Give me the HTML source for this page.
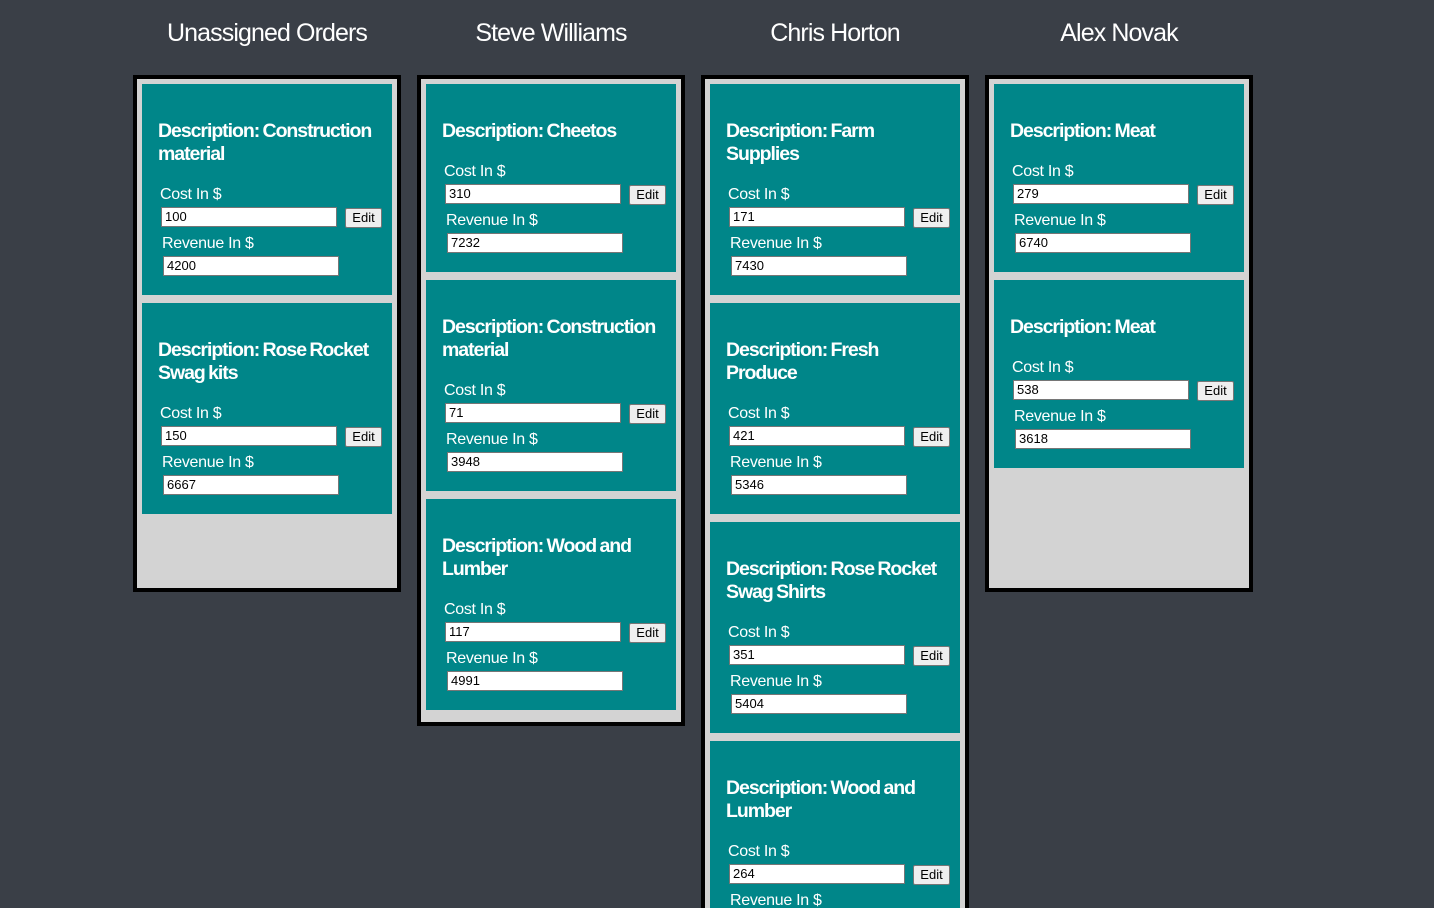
<!DOCTYPE html>
<html style="height:908px;overflow:hidden"><head><meta charset="utf-8"><style>
*{box-sizing:border-box;margin:0;padding:0}
body{width:1434px;height:908px;overflow:hidden;background:#3a3f47;font-family:"Liberation Sans",sans-serif;position:relative}
.h{position:absolute;top:17px;width:268px;text-align:center;color:#fff;font-size:25px;letter-spacing:-0.9px;line-height:32px}
.col{position:absolute;top:75px;width:268px;border:4px solid #000;background:#d3d3d3;padding:5px 5px 12px 5px;min-height:517px}
.card{background:#008689;padding:36px 0 19px 0;margin-bottom:8px;color:#fff}
.card:last-child{margin-bottom:0}
.t{font-size:19.5px;line-height:23px;padding-left:16px;white-space:nowrap;letter-spacing:-1.05px;font-weight:bold;word-spacing:-1px}
.l{font-size:16px;line-height:19px;letter-spacing:-0.3px}
.l1{margin-top:19px;padding-left:18px}
.r{display:flex;align-items:flex-start;margin-top:3px;padding-left:19px}
.in{width:176px;height:20px;background:#fff;border:1px solid #767676;color:#000;font-size:13px;line-height:18px;padding-left:3px}
.b{margin-left:8px;margin-top:1px;width:37px;height:20px;background:#efefef;border:1px solid #767676;border-radius:2px;color:#000;font-size:13px;line-height:18px;text-align:center}
.l2{margin-top:6px;padding-left:20px}
.r2{margin-top:3px;padding-left:21px}
</style></head><body>
<div class="h" style="left:133px">Unassigned Orders</div>
<div class="h" style="left:417px">Steve Williams</div>
<div class="h" style="left:701px">Chris Horton</div>
<div class="h" style="left:985px">Alex Novak</div>

<div class="col" style="left:133px">
<div class="card"><div class="t">Description: Construction<br>material</div><div class="l l1">Cost In $</div><div class="r"><div class="in">100</div><div class="b">Edit</div></div><div class="l l2">Revenue In $</div><div class="r r2"><div class="in">4200</div></div></div>
<div class="card"><div class="t">Description: Rose Rocket<br>Swag kits</div><div class="l l1">Cost In $</div><div class="r"><div class="in">150</div><div class="b">Edit</div></div><div class="l l2">Revenue In $</div><div class="r r2"><div class="in">6667</div></div></div>
</div>

<div class="col" style="left:417px">
<div class="card"><div class="t">Description: Cheetos</div><div class="l l1">Cost In $</div><div class="r"><div class="in">310</div><div class="b">Edit</div></div><div class="l l2">Revenue In $</div><div class="r r2"><div class="in">7232</div></div></div>
<div class="card"><div class="t">Description: Construction<br>material</div><div class="l l1">Cost In $</div><div class="r"><div class="in">71</div><div class="b">Edit</div></div><div class="l l2">Revenue In $</div><div class="r r2"><div class="in">3948</div></div></div>
<div class="card"><div class="t">Description: Wood and<br>Lumber</div><div class="l l1">Cost In $</div><div class="r"><div class="in">117</div><div class="b">Edit</div></div><div class="l l2">Revenue In $</div><div class="r r2"><div class="in">4991</div></div></div>
</div>

<div class="col" style="left:701px">
<div class="card"><div class="t">Description: Farm<br>Supplies</div><div class="l l1">Cost In $</div><div class="r"><div class="in">171</div><div class="b">Edit</div></div><div class="l l2">Revenue In $</div><div class="r r2"><div class="in">7430</div></div></div>
<div class="card"><div class="t">Description: Fresh<br>Produce</div><div class="l l1">Cost In $</div><div class="r"><div class="in">421</div><div class="b">Edit</div></div><div class="l l2">Revenue In $</div><div class="r r2"><div class="in">5346</div></div></div>
<div class="card"><div class="t">Description: Rose Rocket<br>Swag Shirts</div><div class="l l1">Cost In $</div><div class="r"><div class="in">351</div><div class="b">Edit</div></div><div class="l l2">Revenue In $</div><div class="r r2"><div class="in">5404</div></div></div>
<div class="card"><div class="t">Description: Wood and<br>Lumber</div><div class="l l1">Cost In $</div><div class="r"><div class="in">264</div><div class="b">Edit</div></div><div class="l l2">Revenue In $</div><div class="r r2"><div class="in">0</div></div></div>
</div>

<div class="col" style="left:985px">
<div class="card"><div class="t">Description: Meat</div><div class="l l1">Cost In $</div><div class="r"><div class="in">279</div><div class="b">Edit</div></div><div class="l l2">Revenue In $</div><div class="r r2"><div class="in">6740</div></div></div>
<div class="card"><div class="t">Description: Meat</div><div class="l l1">Cost In $</div><div class="r"><div class="in">538</div><div class="b">Edit</div></div><div class="l l2">Revenue In $</div><div class="r r2"><div class="in">3618</div></div></div>
</div>
</body></html>
